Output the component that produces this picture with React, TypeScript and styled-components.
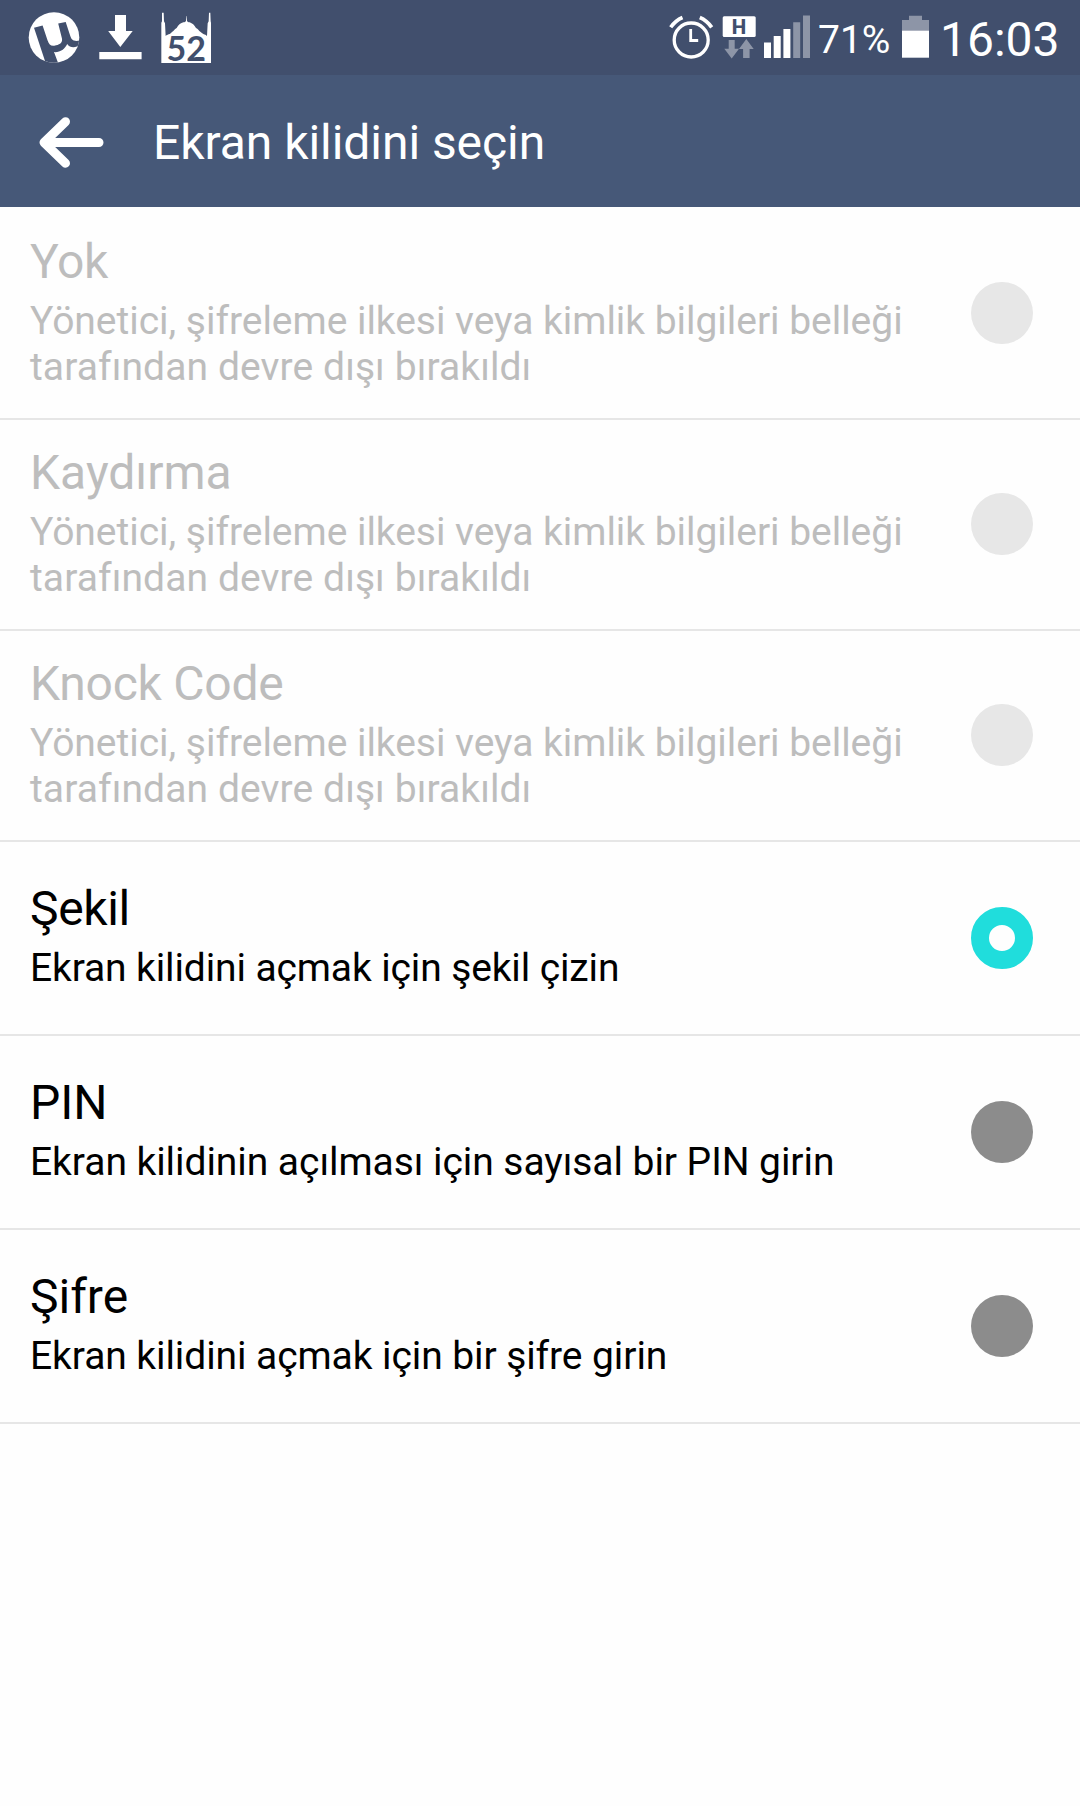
import React from "react";
import styled, { createGlobalStyle } from "styled-components";

const STATUS_BG = "#414f6d";
const DIM = "#8d95a7";

const GlobalStyle = createGlobalStyle`
  body { margin: 0; background: #fefefe; }
  * { box-sizing: border-box; }
`;

const Screen = styled.div`
  width: 1080px;
  min-height: 1806px;
  display: flex;
  flex-direction: column;
  background: #fefefe;
  font-family: Roboto, "Liberation Sans", sans-serif;
  overflow: hidden;
`;

const StatusBar = styled.header`
  height: 75px;
  display: flex;
  justify-content: space-between;
  background: ${STATUS_BG};
  color: #fff;
`;

const StatusGroup = styled.div`
  display: flex;
  height: 75px;
`;

const Glyph = styled.svg`
  display: block;
  flex: none;
`;

const Percent = styled.span`
  width: 74px;
  padding-top: 17px;
  font-size: 39px;
  line-height: 46px;
  white-space: nowrap;
`;

const Clock = styled.span`
  width: 142px;
  padding: 11px 0 0 2px;
  font-size: 48px;
  line-height: 57px;
  white-space: nowrap;
`;

const TitleBar = styled.div`
  height: 132px;
  display: flex;
  background: #465878;
  color: #fff;
`;

const BackButton = styled.button`
  width: 153px;
  height: 132px;
  padding: 0;
  border: 0;
  background: none;
  flex: none;
`;

const Heading = styled.h1`
  margin: 0;
  padding-top: 40px;
  font-size: 48px;
  font-weight: 400;
  line-height: 56px;
  letter-spacing: -0.05px;
  white-space: nowrap;
`;

const List = styled.ul`
  list-style: none;
  margin: 0;
  padding: 2px 0 0;
`;

const Row = styled.li<{ $tall: boolean; $disabled: boolean }>`
  height: ${(p) => (p.$tall ? 211 : 194)}px;
  padding: ${(p) => (p.$tall ? 25 : 39)}px 47px 0 30px;
  display: flex;
  border-bottom: 2px solid #e6e6e6;
  color: ${(p) => (p.$disabled ? "#bdbdbd" : "#000")};
`;

const RowText = styled.div`
  width: 941px;
`;

const RowTitle = styled.div<{ $tracking: number }>`
  margin-bottom: 8px;
  font-size: 48px;
  line-height: 56px;
  letter-spacing: ${(p) => p.$tracking}px;
`;

const SummaryLine = styled.div<{ $tracking: number }>`
  font-size: 39px;
  line-height: 46px;
  letter-spacing: ${(p) => p.$tracking}px;
  white-space: nowrap;
`;

const Radio = styled.span<{ $tall: boolean; $state: State }>`
  width: 62px;
  height: 62px;
  margin-top: ${(p) => (p.$tall ? 48 : 26)}px;
  border-radius: 50%;
  flex: none;
  background: ${(p) =>
    p.$state === "disabled" ? "#e7e7e7" : p.$state === "on" ? "#fefefe" : "#8c8c8c"};
  border: ${(p) => (p.$state === "on" ? "18px solid #20dddc" : "0")};
`;

type State = "disabled" | "on" | "off";
type Line = { text: string; tracking: number };

const BLOCKED: Line[] = [
  { text: "Yönetici, şifreleme ilkesi veya kimlik bilgileri belleği", tracking: -0.03 },
  { text: "tarafından devre dışı bırakıldı", tracking: 0.1 },
];

const options: { title: string; tracking: number; summary: Line[]; state: State }[] = [
  { title: "Yok", tracking: -0.3, summary: BLOCKED, state: "disabled" },
  { title: "Kaydırma", tracking: 0, summary: BLOCKED, state: "disabled" },
  { title: "Knock Code", tracking: -0.25, summary: BLOCKED, state: "disabled" },
  {
    title: "Şekil",
    tracking: -0.35,
    summary: [{ text: "Ekran kilidini açmak için şekil çizin", tracking: -0.12 }],
    state: "on",
  },
  {
    title: "PIN",
    tracking: 0,
    summary: [{ text: "Ekran kilidinin açılması için sayısal bir PIN girin", tracking: -0.055 }],
    state: "off",
  },
  {
    title: "Şifre",
    tracking: 0,
    summary: [{ text: "Ekran kilidini açmak için bir şifre girin", tracking: -0.08 }],
    state: "off",
  },
];

const TorrentIcon = () => (
  <Glyph width="90" height="75" viewBox="0 0 90 75">
    <defs>
      <clipPath id="disc">
        <circle cx="54" cy="37.5" r="25.3" />
      </clipPath>
    </defs>
    <circle cx="54" cy="37.5" r="25.3" fill="#fff" />
    <g clipPath="url(#disc)">
      <path
        fill={STATUS_BG}
        d="M34 27.800 L42.600 25.600 L47.600 40.500 C49 44.600 50.800 46.200 54.300 45.700 C60 44.900 62.800 42.500 61.900 38.300 L58.200 23.400 L65.700 22 L70.300 36 C71.500 40 73.500 41.700 80 40.500 L80 44.600 C76 48.200 69.900 48.200 67.200 44 C64.800 49.200 60 52.600 54 52.100 L58.500 64 L46 64 Z"
      />
    </g>
  </Glyph>
);

const DownloadIcon = () => (
  <Glyph width="60" height="75" viewBox="90 0 60 75" fill="#fff">
    <path d="M115 15h11v16h6.700L120.300 47 108.200 31H115z" />
    <path d="M99.300 52h42.300v7.200H99.300z" />
  </Glyph>
);

const MosqueIcon = () => (
  <Glyph width="70" height="75" viewBox="150 0 70 75">
    <g transform="scale(.33333)">
      <path
        fill="#fff"
        d="M484 189V68l2-4V38h5l1 26 3 6 2 38c6-6 13-4 19-12 6-4 9-10 14-12 5-10 13-15 20-17 5-1 7-2 8-5l1-14h1l1 14c1 3 3 4 8 5 8 3 14 8 19 17 6 2 8 8 14 12 6 7 13 6 19 12l2-38 3-6 1-26h4l1 26 1 4v121z"
      />
    </g>
    <text
      x="186.300"
      y="61"
      textAnchor="middle"
      fontFamily="Lato, sans-serif"
      fontWeight="700"
      fontSize="34"
      fill={STATUS_BG}
    >
      52
    </text>
  </Glyph>
);

const AlarmIcon = () => (
  <Glyph width="55" height="75" viewBox="663 0 55 75" fill="none" stroke="#fff">
    <circle cx="691.200" cy="40" r="17" strokeWidth="3.300" />
    <path d="M690.700 29v11.500h7.500" strokeWidth="2.800" />
    <path
      d="M670.700 27.300Q675.500 20.500 682.500 17.500M711.700 27.300Q706.800 20.500 699.800 17.500"
      strokeWidth="3.700"
    />
  </Glyph>
);

const DataIcon = () => (
  <Glyph width="42" height="75" viewBox="718 0 42 75">
    <rect x="722.700" y="16.200" width="33" height="20.800" rx="1.500" fill="#fff" />
    <text
      x="739.100"
      y="33.700"
      textAnchor="middle"
      fontFamily="Roboto, sans-serif"
      fontWeight="800"
      fontSize="20.500"
      fill={STATUS_BG}
    >
      H
    </text>
    <path
      fill={DIM}
      d="M728.700 40h6v8.700h4.300l-7.300 9.700-7.400-9.700h4.400zM746.300 39l7.400 10h-4.100v9h-6.500v-9H739z"
    />
  </Glyph>
);

const SignalIcon = () => (
  <Glyph width="58" height="75" viewBox="760 0 58 75">
    <path fill="#fff" d="M764 42.500h7V58h-7zM773.700 36h7v22h-7zM783.400 29h7v29h-7z" />
    <path fill={DIM} d="M793.200 22.200h7V58h-7zM803 15.500h7V58h-7z" />
  </Glyph>
);

const BatteryIcon = () => (
  <Glyph width="46" height="75" viewBox="892 0 46 75">
    <path fill={DIM} d="M909 15.700h13V20h7v11h-27V20h7z" />
    <path fill="#fff" d="M902 30.700h27v27h-27z" />
  </Glyph>
);

export default function App() {
  return (
    <>
      <GlobalStyle />
      <Screen>
        <StatusBar>
          <StatusGroup>
            <TorrentIcon />
            <DownloadIcon />
            <MosqueIcon />
          </StatusGroup>
          <StatusGroup>
            <AlarmIcon />
            <DataIcon />
            <SignalIcon />
            <Percent>71%</Percent>
            <BatteryIcon />
            <Clock>16:03</Clock>
          </StatusGroup>
        </StatusBar>
        <TitleBar>
          <BackButton aria-label="Geri">
            <Glyph
              width="152"
              height="132"
              viewBox="0 75 152 132"
              fill="none"
              stroke="#fff"
              strokeWidth="9"
              strokeLinecap="round"
              strokeLinejoin="round"
            >
              <path d="M65.500 121.700 44 142.400l21.500 20.800M46 142.500h53" />
            </Glyph>
          </BackButton>
          <Heading>Ekran kilidini seçin</Heading>
        </TitleBar>
        <List>
          {options.map((o) => {
            const disabled = o.state === "disabled";
            return (
              <Row key={o.title} $tall={disabled} $disabled={disabled}>
                <RowText>
                  <RowTitle $tracking={o.tracking}>{o.title}</RowTitle>
                  {o.summary.map((line) => (
                    <SummaryLine key={line.text} $tracking={line.tracking}>
                      {line.text}
                    </SummaryLine>
                  ))}
                </RowText>
                <Radio $tall={disabled} $state={o.state} />
              </Row>
            );
          })}
        </List>
      </Screen>
    </>
  );
}
